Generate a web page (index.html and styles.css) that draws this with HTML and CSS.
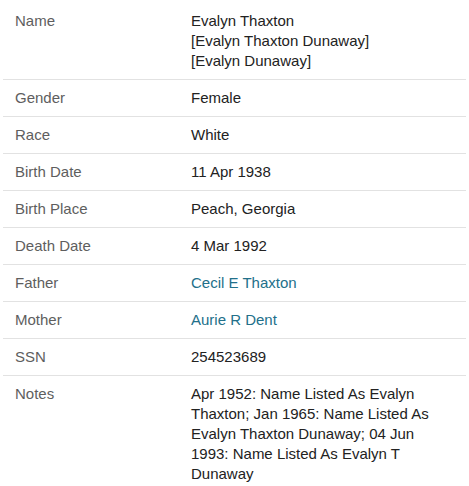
FILE: index.html
```html
<!DOCTYPE html>
<html>
<head>
<meta charset="utf-8">
<link rel="stylesheet" href="styles.css">
</head>
<body>
<div class="record">
  <div class="row"><div class="label">Name</div><div class="value">Evalyn Thaxton<br>[Evalyn Thaxton Dunaway]<br>[Evalyn Dunaway]</div></div>
  <div class="row"><div class="label">Gender</div><div class="value">Female</div></div>
  <div class="row"><div class="label">Race</div><div class="value">White</div></div>
  <div class="row"><div class="label">Birth Date</div><div class="value">11 Apr 1938</div></div>
  <div class="row"><div class="label">Birth Place</div><div class="value">Peach, Georgia</div></div>
  <div class="row"><div class="label">Death Date</div><div class="value">4 Mar 1992</div></div>
  <div class="row"><div class="label">Father</div><div class="value"><a class="link" href="#">Cecil E Thaxton</a></div></div>
  <div class="row"><div class="label">Mother</div><div class="value"><a class="link" href="#">Aurie R Dent</a></div></div>
  <div class="row"><div class="label">SSN</div><div class="value">254523689</div></div>
  <div class="row"><div class="label">Notes</div><div class="value">Apr 1952: Name Listed As Evalyn Thaxton; Jan 1965: Name Listed As Evalyn Thaxton Dunaway; 04 Jun 1993: Name Listed As Evalyn T Dunaway</div></div>
</div>
</body>
</html>
```
FILE: styles.css
```css
html, body { margin: 0; padding: 0; background: #fff; }
body { font-family: "Liberation Sans", Arial, sans-serif; font-size: 15px; line-height: 20px; color: #222; }
.record { margin: 3px 3px 0 3px; }
.row { display: grid; grid-template-columns: 176px 1fr; padding: 8px 12px; border-bottom: 1px solid #e2e2e2; }
.row:last-child { border-bottom: none; }
.label { color: #5e5e5e; }
.value { color: #222; }
.link { color: #22708a; text-decoration: none; }
```
